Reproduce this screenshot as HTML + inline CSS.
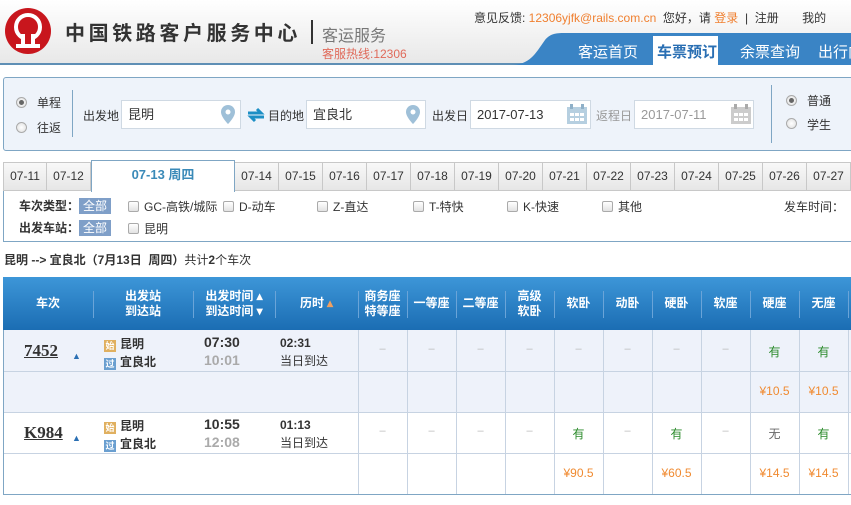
<!DOCTYPE html>
<html><head><meta charset="utf-8">
<style>
*{margin:0;padding:0;box-sizing:border-box}
body{width:851px;height:505px;overflow:hidden;background:#fff;font-family:"Liberation Sans","Noto Sans CJK SC",sans-serif;font-size:12px;color:#333;position:relative}
.a{position:absolute;white-space:nowrap}
.hdr{left:0;top:0;width:851px;height:65px;background:linear-gradient(#fff,#e8e8e8);border-bottom:2px solid #5f8fb5}
.inp{position:absolute;height:29px;background:#fff;border:1px solid #cfd9e3;font-size:13px;line-height:27px;padding-left:6px;color:#333}
.radio{position:absolute;width:11px;height:11px;border-radius:50%;border:1px solid #aaa;background:radial-gradient(#fff,#ddd)}
.radio.on::after{content:"";position:absolute;left:2px;top:2px;width:5px;height:5px;border-radius:50%;background:#666}
.tab{position:absolute;top:162px;height:29px;width:44px;border:1px solid #c8c8c8;border-left:none;background:linear-gradient(#f8f8f8,#e6e6e6);text-align:center;line-height:27px;font-size:12px;color:#333}
.cb{display:inline-block;width:11px;height:11px;border:1px solid #aaa;border-radius:2px;background:linear-gradient(#fff,#e2e2e2);vertical-align:-1px;margin-right:5px}
.all{display:inline-block;background:#7f9fc8;color:#fff;padding:0 4px;height:16px;line-height:16px;font-size:12px}
.th{position:absolute;top:277px;height:53px;color:#fff;font-weight:bold;font-size:12px;text-align:center;display:flex;align-items:center;justify-content:center;line-height:15px}
.vd{position:absolute;top:291px;width:1px;height:27px;background:#6aa4d8}
.cell{position:absolute;width:49px;text-align:center;font-size:12px}
.d{color:#bbb;font-size:11px}
</style></head><body>
<div class="a hdr"></div>
<svg class="a" style="left:4px;top:7px" width="48" height="48" viewBox="0 0 48 48">
<circle cx="24" cy="24" r="23" fill="#c8161d"/>
<circle cx="24" cy="20" r="12" fill="none" stroke="#fff" stroke-width="4"/>
<rect x="17" y="24" width="14" height="12" fill="#c8161d"/>
<path d="M19 27 V37 M29 27 V37" stroke="#fff" stroke-width="4"/>
<rect x="12" y="37" width="24" height="4" fill="#fff"/>
</svg>
<div class="a" style="left:65px;top:17px;font-size:20px;font-weight:bold;color:#333;letter-spacing:3.6px">中国铁路客户服务中心</div>
<div class="a" style="left:311px;top:20px;width:2px;height:24px;background:#333"></div>
<div class="a" style="left:322px;top:22px;font-size:16px;color:#777">客运服务</div>
<div class="a" style="left:322px;top:45px;font-size:12px;color:#e06a5a">客服热线:12306</div>
<div class="a" style="left:474px;top:9px;font-size:12px;color:#333">意见反馈: <span style="color:#f08030">12306yjfk@rails.com.cn</span>&nbsp; 您好，请 <span style="color:#f08030">登录</span> &nbsp;|&nbsp; 注册 &nbsp; &nbsp; &nbsp; 我的</div>
<svg class="a" style="left:510px;top:32px" width="341" height="33"><path d="M0 33 C20 33 25 22 35 8 C40 2 45 1 55 1 L341 1 L341 33 Z" fill="#3a84c5"/></svg>
<div class="a" style="left:653px;top:36px;width:65px;height:29px;background:#fff"></div>
<div class="a" style="left:578px;top:41px;font-size:15px;color:#fff">客运首页</div>
<div class="a" style="left:657px;top:41px;font-size:15px;color:#2a6fb3;font-weight:bold">车票预订</div>
<div class="a" style="left:740px;top:41px;font-size:15px;color:#fff">余票查询</div>
<div class="a" style="left:818px;top:41px;font-size:15px;color:#fff">出行向导</div>

<div class="a" style="left:3px;top:77px;width:860px;height:74px;background:#eef3fa;border:1px solid #7fa6c4;border-radius:3px"></div>
<div class="radio on" style="left:16px;top:97px"></div><div class="a" style="left:37px;top:94px;font-size:12px">单程</div>
<div class="radio" style="left:16px;top:122px"></div><div class="a" style="left:37px;top:119px;font-size:12px">往返</div>
<div class="a" style="left:72px;top:90px;width:1px;height:47px;background:#7fa6c4"></div>
<div class="a" style="left:83px;top:107px;font-size:12px">出发地</div>
<div class="inp" style="left:121px;top:100px;width:120px">昆明</div>
<svg class="a" style="left:221px;top:105px" width="14" height="19"><path d="M7 0 A7 7 0 0 0 0 7 C0 12 7 19 7 19 C7 19 14 12 14 7 A7 7 0 0 0 7 0Z" fill="#9fc0d8"/><circle cx="7" cy="7" r="2.5" fill="#fff"/></svg>
<svg class="a" style="left:247px;top:107px" width="18" height="16"><path d="M1 6 H14 L10 2 M17 10 H4 L8 14" stroke="#1d8fc5" stroke-width="3" fill="none"/></svg>
<div class="a" style="left:268px;top:107px;font-size:12px">目的地</div>
<div class="inp" style="left:306px;top:100px;width:120px">宜良北</div>
<svg class="a" style="left:406px;top:105px" width="14" height="19"><path d="M7 0 A7 7 0 0 0 0 7 C0 12 7 19 7 19 C7 19 14 12 14 7 A7 7 0 0 0 7 0Z" fill="#9fc0d8"/><circle cx="7" cy="7" r="2.5" fill="#fff"/></svg>
<div class="a" style="left:432px;top:107px;font-size:12px">出发日</div>
<div class="inp" style="left:470px;top:100px;width:121px">2017-07-13</div>
<svg class="a" style="left:567px;top:104px" width="20" height="20"><rect x="0" y="3" width="20" height="17" fill="#b6cfe0"/><rect x="3" y="0" width="3" height="5" fill="#8fb0c8"/><rect x="14" y="0" width="3" height="5" fill="#8fb0c8"/><g fill="#fff"><rect x="3" y="9" width="4" height="3"/><rect x="8" y="9" width="4" height="3"/><rect x="13" y="9" width="4" height="3"/><rect x="3" y="14" width="4" height="3"/><rect x="8" y="14" width="4" height="3"/><rect x="13" y="14" width="4" height="3"/></g></svg>
<div class="a" style="left:596px;top:107px;font-size:12px;color:#999">返程日</div>
<div class="inp" style="left:634px;top:100px;width:120px;color:#999">2017-07-11</div>
<svg class="a" style="left:731px;top:104px" width="20" height="20"><rect x="0" y="3" width="20" height="17" fill="#ccc"/><rect x="3" y="0" width="3" height="5" fill="#aaa"/><rect x="14" y="0" width="3" height="5" fill="#aaa"/><g fill="#fff"><rect x="3" y="9" width="4" height="3"/><rect x="8" y="9" width="4" height="3"/><rect x="13" y="9" width="4" height="3"/><rect x="3" y="14" width="4" height="3"/><rect x="8" y="14" width="4" height="3"/><rect x="13" y="14" width="4" height="3"/></g></svg>
<div class="a" style="left:771px;top:85px;width:1px;height:58px;background:#7fa6c4"></div>
<div class="radio on" style="left:786px;top:95px"></div><div class="a" style="left:807px;top:92px;font-size:12px">普通</div>
<div class="radio" style="left:786px;top:118px"></div><div class="a" style="left:807px;top:116px;font-size:12px">学生</div>

<div class="a" style="left:3px;top:190px;width:860px;height:52px;border:1px solid #7fa6c4"></div>
<div class="tab" style="left:3px;border-left:1px solid #c8c8c8">07-11</div>
<div class="tab" style="left:47px">07-12</div>
<div class="a" style="left:91px;top:160px;width:144px;height:32px;background:#fff;border:1px solid #7fa6c4;border-bottom:none;text-align:center;line-height:28px;font-weight:bold;color:#3a8ab8;font-size:13px">07-13 周四</div>
<div class="tab" style="left:235px">07-14</div><div class="tab" style="left:279px">07-15</div><div class="tab" style="left:323px">07-16</div><div class="tab" style="left:367px">07-17</div><div class="tab" style="left:411px">07-18</div><div class="tab" style="left:455px">07-19</div><div class="tab" style="left:499px">07-20</div><div class="tab" style="left:543px">07-21</div><div class="tab" style="left:587px">07-22</div><div class="tab" style="left:631px">07-23</div><div class="tab" style="left:675px">07-24</div><div class="tab" style="left:719px">07-25</div><div class="tab" style="left:763px">07-26</div><div class="tab" style="left:807px">07-27</div>

<div class="a" style="left:19px;top:197px;font-weight:bold;font-size:12px">车次类型：<span class="all" style="font-weight:normal">全部</span></div>
<div class="a" style="left:128px;top:198px"><span class="cb"></span>GC-高铁/城际</div>
<div class="a" style="left:223px;top:198px"><span class="cb"></span>D-动车</div>
<div class="a" style="left:317px;top:198px"><span class="cb"></span>Z-直达</div>
<div class="a" style="left:413px;top:198px"><span class="cb"></span>T-特快</div>
<div class="a" style="left:507px;top:198px"><span class="cb"></span>K-快速</div>
<div class="a" style="left:602px;top:198px"><span class="cb"></span>其他</div>
<div class="a" style="left:784px;top:198px">发车时间：</div>
<div class="a" style="left:19px;top:219px;font-weight:bold;font-size:12px">出发车站：<span class="all" style="font-weight:normal">全部</span></div>
<div class="a" style="left:128px;top:220px"><span class="cb"></span>昆明</div>

<div class="a" style="left:4px;top:251px;font-size:12px"><b>昆明 --&gt; 宜良北（7月13日&nbsp; 周四）</b>共计<b>2</b>个车次</div>

<div class="a" style="left:3px;top:277px;width:860px;height:218px;border:1px solid #7fa6c4"></div>
<div class="a" style="left:3px;top:277px;width:860px;height:53px;background:linear-gradient(#3d96d8,#1b6db3)"></div>
<div class="th" style="left:3px;width:90px">车次</div>
<div class="th" style="left:93px;width:100px">出发站<br>到达站</div>
<div class="th" style="left:193px;width:82px">出发时间 ▴<br>到达时间 ▾</div>
<div class="th" style="left:275px;width:83px">历时 <span style="color:#f0a060;margin-left:3px">▴</span></div>
<div class="th" style="left:358px;width:49px">商务座<br>特等座</div>
<div class="th" style="left:407px;width:49px">一等座</div>
<div class="th" style="left:456px;width:49px">二等座</div>
<div class="th" style="left:505px;width:49px">高级<br>软卧</div>
<div class="th" style="left:554px;width:49px">软卧</div>
<div class="th" style="left:603px;width:49px">动卧</div>
<div class="th" style="left:652px;width:49px">硬卧</div>
<div class="th" style="left:701px;width:49px">软座</div>
<div class="th" style="left:750px;width:49px">硬座</div>
<div class="th" style="left:799px;width:49px">无座</div>
<div class="vd" style="left:93px"></div><div class="vd" style="left:193px"></div><div class="vd" style="left:275px"></div><div class="vd" style="left:358px"></div><div class="vd" style="left:407px"></div><div class="vd" style="left:456px"></div><div class="vd" style="left:505px"></div><div class="vd" style="left:554px"></div><div class="vd" style="left:603px"></div><div class="vd" style="left:652px"></div><div class="vd" style="left:701px"></div><div class="vd" style="left:750px"></div><div class="vd" style="left:799px"></div><div class="vd" style="left:848px"></div>

<div class="a" style="left:4px;top:330px;width:858px;height:82px;background:#eef2fa"></div>
<div class="a" style="left:4px;top:371px;width:858px;height:1px;background:#c7d3e2"></div>
<div class="a" style="left:4px;top:412px;width:858px;height:1px;background:#c7d3e2"></div>
<div class="a" style="left:4px;top:453px;width:858px;height:1px;background:#c7d3e2"></div>
<div class="a" style="left:358px;top:330px;width:1px;height:164px;background:#c7d3e2"></div>
<div class="a" style="left:407px;top:330px;width:1px;height:164px;background:#c7d3e2"></div>
<div class="a" style="left:456px;top:330px;width:1px;height:164px;background:#c7d3e2"></div>
<div class="a" style="left:505px;top:330px;width:1px;height:164px;background:#c7d3e2"></div>
<div class="a" style="left:554px;top:330px;width:1px;height:164px;background:#c7d3e2"></div>
<div class="a" style="left:603px;top:330px;width:1px;height:164px;background:#c7d3e2"></div>
<div class="a" style="left:652px;top:330px;width:1px;height:164px;background:#c7d3e2"></div>
<div class="a" style="left:701px;top:330px;width:1px;height:164px;background:#c7d3e2"></div>
<div class="a" style="left:750px;top:330px;width:1px;height:164px;background:#c7d3e2"></div>
<div class="a" style="left:799px;top:330px;width:1px;height:164px;background:#c7d3e2"></div>
<div class="a" style="left:848px;top:330px;width:1px;height:164px;background:#c7d3e2"></div>

<div class="a" style="left:24px;top:341px;font-size:17px;font-weight:bold;color:#333;text-decoration:underline;font-family:'Liberation Serif',serif">7452</div>
<div class="a" style="left:72px;top:351px;font-size:9px;color:#2a6fb3">▲</div>
<div class="a" style="left:104px;top:335px;font-size:12px;font-weight:bold;line-height:18px"><span style="display:inline-block;width:12px;height:12px;background:#e0b060;color:#fff;font-size:9px;line-height:12px;text-align:center;vertical-align:-1px;margin-right:4px">始</span>昆明<br><span style="display:inline-block;width:12px;height:12px;background:#6a9fd0;color:#fff;font-size:9px;line-height:12px;text-align:center;vertical-align:-1px;margin-right:4px">过</span>宜良北</div>
<div class="a" style="left:204px;top:333px;font-size:14px;font-weight:bold;line-height:18px">07:30<br><span style="color:#aaa">10:01</span></div>
<div class="a" style="left:280px;top:334px;font-size:12px;line-height:18px"><b>02:31</b><br>当日到达</div>

<div class="a" style="left:24px;top:423px;font-size:17px;font-weight:bold;color:#333;text-decoration:underline;font-family:'Liberation Serif',serif">K984</div>
<div class="a" style="left:72px;top:433px;font-size:9px;color:#2a6fb3">▲</div>
<div class="a" style="left:104px;top:417px;font-size:12px;font-weight:bold;line-height:18px"><span style="display:inline-block;width:12px;height:12px;background:#e0b060;color:#fff;font-size:9px;line-height:12px;text-align:center;vertical-align:-1px;margin-right:4px">始</span>昆明<br><span style="display:inline-block;width:12px;height:12px;background:#6a9fd0;color:#fff;font-size:9px;line-height:12px;text-align:center;vertical-align:-1px;margin-right:4px">过</span>宜良北</div>
<div class="a" style="left:204px;top:415px;font-size:14px;font-weight:bold;line-height:18px">10:55<br><span style="color:#aaa">12:08</span></div>
<div class="a" style="left:280px;top:416px;font-size:12px;line-height:18px"><b>01:13</b><br>当日到达</div>

<div class="cell a d" style="left:358px;top:343px">–</div>
<div class="cell a d" style="left:407px;top:343px">–</div>
<div class="cell a d" style="left:456px;top:343px">–</div>
<div class="cell a d" style="left:505px;top:343px">–</div>
<div class="cell a d" style="left:554px;top:343px">–</div>
<div class="cell a d" style="left:603px;top:343px">–</div>
<div class="cell a d" style="left:652px;top:343px">–</div>
<div class="cell a d" style="left:701px;top:343px">–</div>
<div class="cell a" style="left:750px;top:343px;color:#2a8a2a">有</div>
<div class="cell a" style="left:799px;top:343px;color:#2a8a2a">有</div>
<div class="cell a" style="left:750px;top:384px;color:#f08a30">¥10.5</div>
<div class="cell a" style="left:799px;top:384px;color:#f08a30">¥10.5</div>

<div class="cell a d" style="left:358px;top:425px">–</div>
<div class="cell a d" style="left:407px;top:425px">–</div>
<div class="cell a d" style="left:456px;top:425px">–</div>
<div class="cell a d" style="left:505px;top:425px">–</div>
<div class="cell a" style="left:554px;top:425px;color:#2a8a2a">有</div>
<div class="cell a d" style="left:603px;top:425px">–</div>
<div class="cell a" style="left:652px;top:425px;color:#2a8a2a">有</div>
<div class="cell a d" style="left:701px;top:425px">–</div>
<div class="cell a" style="left:750px;top:425px;color:#666">无</div>
<div class="cell a" style="left:799px;top:425px;color:#2a8a2a">有</div>
<div class="cell a" style="left:554px;top:466px;color:#f08a30">¥90.5</div>
<div class="cell a" style="left:652px;top:466px;color:#f08a30">¥60.5</div>
<div class="cell a" style="left:750px;top:466px;color:#f08a30">¥14.5</div>
<div class="cell a" style="left:799px;top:466px;color:#f08a30">¥14.5</div>
</body></html>
